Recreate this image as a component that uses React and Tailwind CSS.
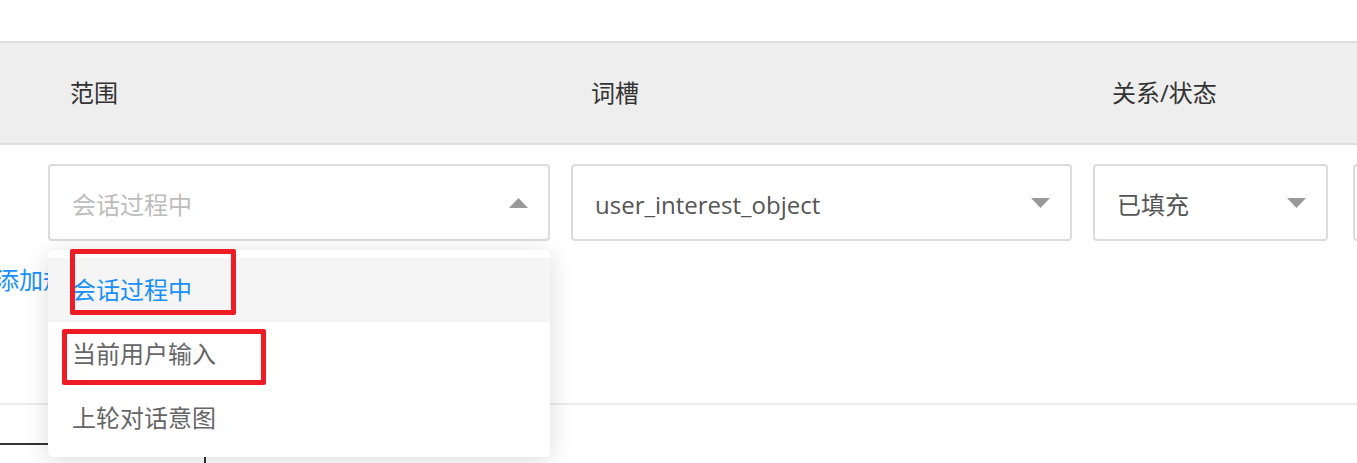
import React from 'react'

function Caret({ up }) {
  return (
    <svg width="19" height="10" viewBox="0 0 19 10" className="shrink-0">
      <polygon points={up ? '0,10 19,10 9.5,0' : '0,0 19,0 9.5,10'} fill="#999" />
    </svg>
  )
}

function Select({ width, value, placeholder, open }) {
  return (
    <div
      className={`${width} h-[77px] shrink-0 border-2 border-[#dcdcdc] rounded-[4px] bg-white flex items-center justify-between pl-[22px] pr-[20px]`}
    >
      <span className={`pt-[5px] text-[24px] ${placeholder ? 'text-[#bdbdbd]' : 'text-[#555]'}`}>{value}</span>
      <Caret up={open} />
    </div>
  )
}

const options = [
  { label: '会话过程中', active: true },
  { label: '当前用户输入' },
  { label: '上轮对话意图' },
]

export default function App() {
  return (
    <div className="relative w-[1357px] h-[463px] overflow-hidden bg-white font-['Open_Sans','Noto_Sans_CJK_SC',sans-serif]">
      <div className="h-[41px]" />

      {/* table header */}
      <div className="h-[104px] bg-[#eeeeee] border-y-2 border-[#dedede] flex items-center pl-[48px] text-[24px] text-[#333]">
        <div className="w-[522px] pl-[22px]">范围</div>
        <div className="w-[523px] pl-[21px]">词槽</div>
        <div className="pl-[19px]">关系/状态</div>
      </div>

      {/* condition row */}
      <div className="relative h-[260px] border-b-2 border-[#ebebeb]">
        <div className="flex gap-[21px] pl-[48px] pt-[19px]">
          <Select width="w-[502px]" value="会话过程中" placeholder open />
          <Select width="w-[501px]" value="user_interest_object" />
          <Select width="w-[235px]" value="已填充" />
          <div className="w-[40px] h-[77px] shrink-0 border-2 border-[#dcdcdc] rounded-[4px] ml-[4px]" />
        </div>

        <div className="-ml-[5px] mt-[21px] text-[24px] text-[#1890ff]">添加规则</div>

        {/* dropdown */}
        <div className="absolute left-[48px] top-[105px] w-[502px] h-[207px] bg-white rounded-[5px] shadow-[0_4px_26px_rgba(0,0,0,0.14)] py-[8px] z-10">
          {options.map((o) => (
            <div
              key={o.label}
              className={`h-[64px] flex items-center pl-[24px] text-[24px] ${
                o.active ? 'bg-[#f5f5f5] text-[#1890ff]' : 'text-[#666]'
              }`}
            >
              {o.label}
            </div>
          ))}
        </div>
      </div>

      {/* next block */}
      <div className="pt-[38px]">
        <div className="w-[206px] h-[40px] border-t-2 border-r-2 border-[#333]" />
      </div>

      {/* annotation marks */}
      <div className="absolute left-[70px] top-[249px] w-[166px] h-[66px] border-[5px] border-[#ee1c25] rounded-[2px] z-20" />
      <div className="absolute left-[62px] top-[329px] w-[204px] h-[56px] border-[5px] border-[#ee1c25] rounded-[2px] z-20" />
    </div>
  )
}
